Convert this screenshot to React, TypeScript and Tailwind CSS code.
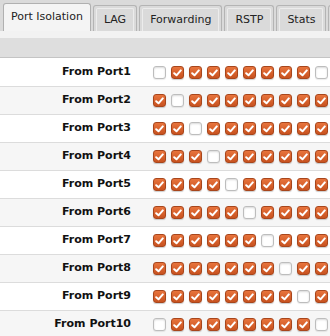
import React from 'react';

const tabs = ['Port Isolation', 'LAG', 'Forwarding', 'RSTP', 'Stats', 'Hosts'];

function Box({ on }: { on: boolean }) {
  if (!on) {
    return (
      <span className="block w-[13px] h-[13px] rounded-[3px] border border-[#bdbdbd] bg-white shadow-[inset_0_1px_2px_rgba(0,0,0,0.15),0_1px_1px_rgba(0,0,0,0.08)]" />
    );
  }
  return (
    <span className="flex items-center justify-center w-[13px] h-[13px] rounded-[3px] border border-[#a8461c] bg-gradient-to-b from-[#e8743c] to-[#c8521f] shadow-[0_1px_1px_rgba(0,0,0,0.2)]">
      <svg width="9" height="8" viewBox="0 0 9 8">
        <path d="M1.2 4.2 L3.5 6.3 L7.8 1.4" fill="none" stroke="#fff" strokeWidth="2" strokeLinecap="round" strokeLinejoin="round" />
      </svg>
    </span>
  );
}

export default function App() {
  const rows = Array.from({ length: 10 }, (_, i) => i);

  return (
    <div className="w-[330px] h-[336px] overflow-hidden bg-white" style={{ fontFamily: '"DejaVu Sans", Verdana, sans-serif' }}>
      {/* tab strip */}
      <div className="flex items-end gap-[2px] h-[31px] pl-[3px] bg-[#dadada] overflow-hidden">
        {tabs.map((t, i) =>
          i === 0 ? (
            <div key={t} className="h-[28px] shrink-0 px-[7px] flex items-center rounded-t-[3px] border border-b-0 border-[#b0b0b0] bg-[#f4f4f4] text-[11px] text-[#222]">
              {t}
            </div>
          ) : (
            <div key={t} className="h-[26px] shrink-0 px-[2px] pt-[2px] rounded-t-[3px] border border-b-0 border-[#b4b4b4] bg-[#dadada]">
              <div className="h-full px-[7px] flex items-center rounded-t-[2px] border border-b-0 border-[#ececec] text-[11px] text-[#222]">
                {t}
              </div>
            </div>
          )
        )}
      </div>
      <div className="h-[7px] bg-[#f2f2f2]" />
      <div className="h-[20px] bg-[#dedede] border-b border-[#c4c4c4]" />

      <div className="pt-[1px]">
        {rows.map((r) => (
          <div key={r} className={`flex items-center h-[28px] border-b border-[#dcdcdc] ${r % 2 ? 'bg-[#f6f6f6]' : 'bg-white'}`}>
            <div className="w-[131px] text-right text-[11px] font-bold text-[#111]">From Port{r + 1}</div>
            <div className="flex gap-[5px] pl-[22px]">
              {rows.map((c) => {
                const off = c === r || (r === 0 && c === 9) || (r === 9 && c === 0);
                return <Box key={c} on={!off} />;
              })}
            </div>
          </div>
        ))}
      </div>
    </div>
  );
}
